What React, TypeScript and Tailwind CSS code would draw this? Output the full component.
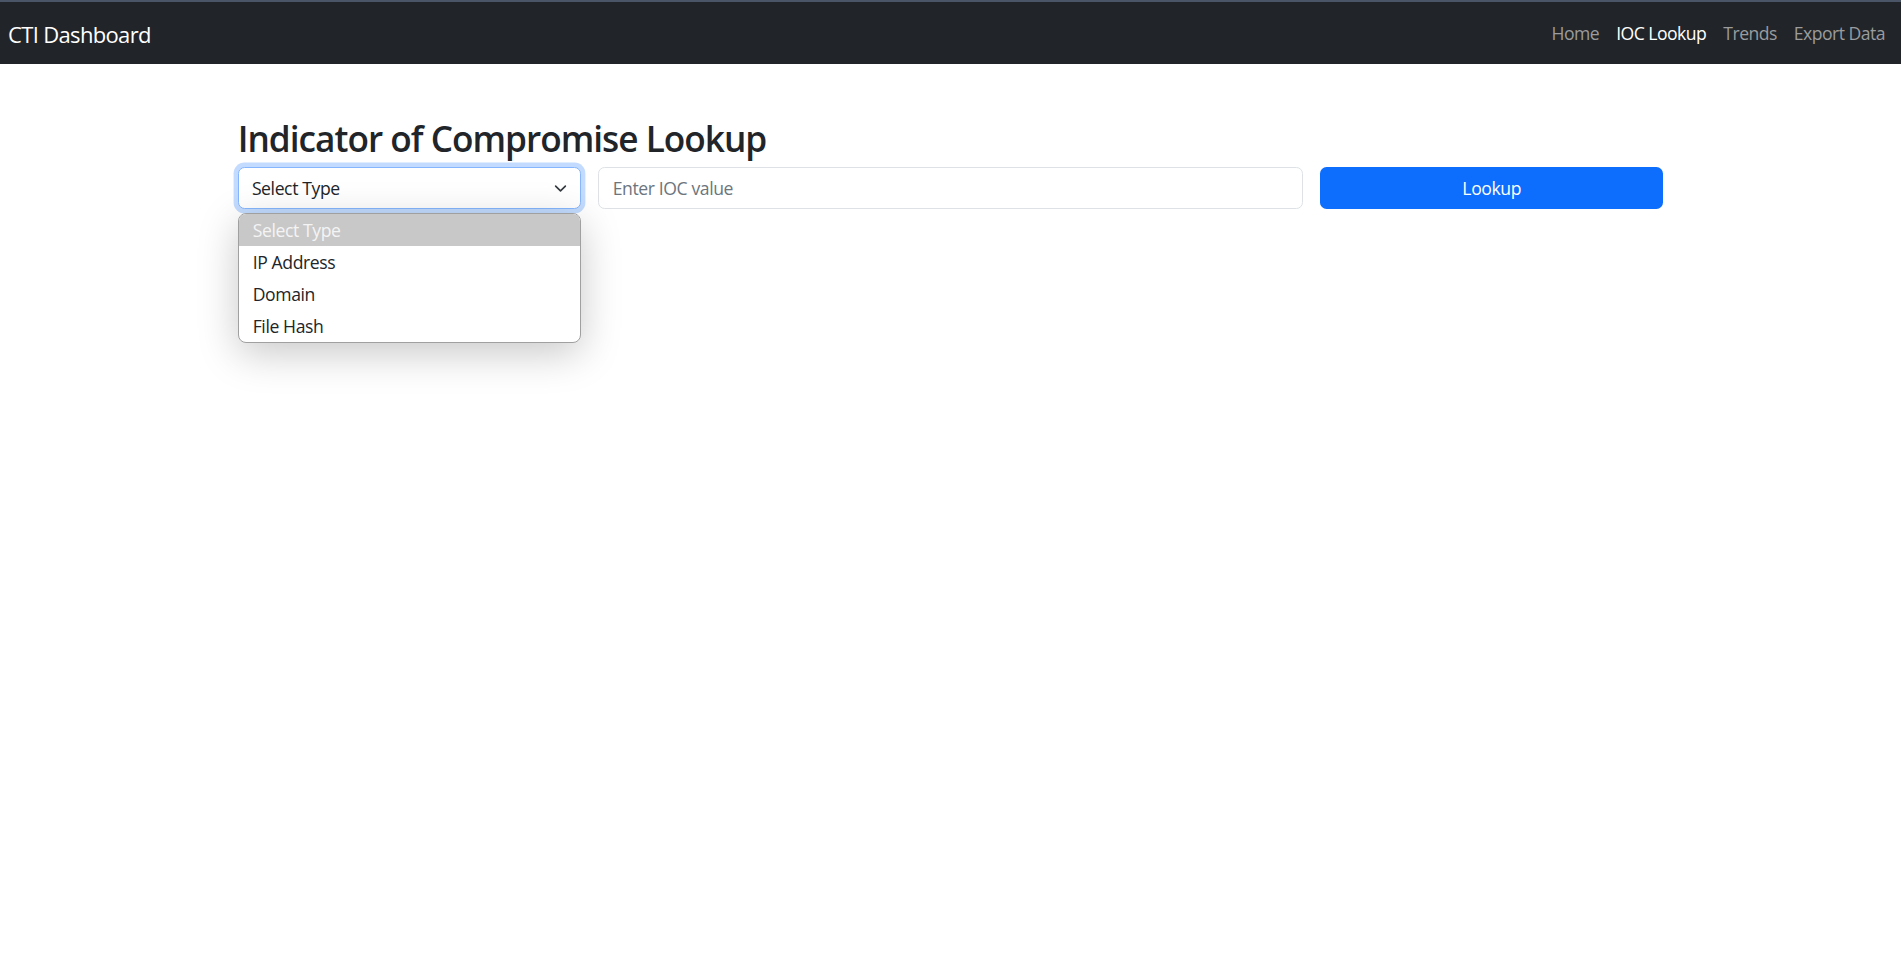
const navLinks = [
  { label: 'Home', active: false },
  { label: 'IOC Lookup', active: true },
  { label: 'Trends', active: false },
  { label: 'Export Data', active: false },
];

const iocTypes = ['Select Type', 'IP Address', 'Domain', 'File Hash'];

// bootstrap-style select arrow
const SelectArrow = () => (
  <svg width="13" height="13" viewBox="0 0 16 16" fill="none" stroke="#343a40" strokeWidth="2" strokeLinecap="round" strokeLinejoin="round">
    <path d="m2 5 6 6 6-6" />
  </svg>
);

export default function App() {
  return (
    <div className="min-h-screen bg-white text-[#212529] font-['Open_Sans',sans-serif] tracking-[-0.025em]">
      {/* NAVBAR */}
      <nav className="h-[64px] bg-[#212529] border-t-2 border-[#4a5568] flex items-center justify-between pl-[8px] pr-[16px] pt-[1px]">
        <span className="text-[22px] text-white leading-none tracking-[-0.03em]">CTI Dashboard</span>
        <div className="flex items-center gap-[17px] text-[17.6px] leading-none tracking-[-0.03em] pt-[1px]">
          {navLinks.map((link) => (
            <a key={link.label} className={link.active ? 'text-white' : 'text-[#9a9c9e]'}>
              {link.label}
            </a>
          ))}
        </div>
      </nav>

      {/* LOOKUP FORM */}
      <main className="max-w-[1452px] mx-auto px-[13.2px] mt-[53px]">
        <h2 className="text-[35.2px] font-semibold leading-[1.2] mb-[8px] tracking-[-0.028em]">Indicator of Compromise Lookup</h2>

        <div className="grid grid-cols-[343.2px_1fr_343.2px] gap-[17.6px]">
          <div className="relative">
            <div className="h-[41.8px] flex items-center justify-between px-[13.2px] bg-white border border-[#86b7fe] rounded-[6.6px] shadow-[0_0_0_4.4px_rgba(13,110,253,0.25)] text-[17.6px]">
              <span>Select Type</span>
              <SelectArrow />
            </div>

            {/* native select popup */}
            <div className="absolute left-0 right-0 top-[46px] z-10 bg-white border border-[#a0a0a0] rounded-[8px] overflow-hidden shadow-[0_10px_40px_rgba(0,0,0,0.22)] text-[17.6px]">
              {iocTypes.map((t, i) => (
                <div
                  key={t}
                  className={`h-[32px] flex items-center px-[14px] ${i === 0 ? 'bg-[#c8c8c8] text-[#f4f4f4]' : 'text-[#212529]'}`}
                >
                  {t}
                </div>
              ))}
            </div>
          </div>

          <div className="h-[41.8px] flex items-center px-[13.2px] border border-[#dee2e6] rounded-[6.6px] text-[17.6px] text-[#6c757d]">
            Enter IOC value
          </div>

          <button className="h-[41.8px] bg-[#0d6efd] text-white rounded-[6.6px] text-[17.6px]">Lookup</button>
        </div>
      </main>
    </div>
  );
}
